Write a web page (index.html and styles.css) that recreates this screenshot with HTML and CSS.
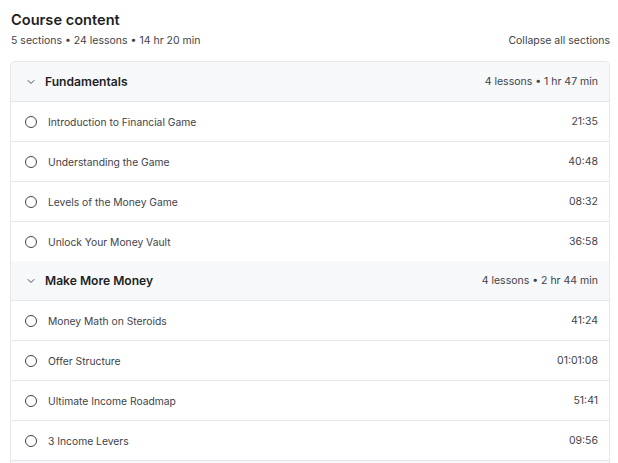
FILE: index.html
```html
<!DOCTYPE html>
<html>
<head>
<meta charset="utf-8">
<link rel="stylesheet" href="styles.css">
</head>
<body>
<div class="page">
  <h2 class="title">Course content</h2>
  <div class="meta-row">
    <span class="meta">5 sections • 24 lessons • 14 hr 20 min</span>
    <span class="collapse">Collapse all sections</span>
  </div>
  <div class="card">
    <div class="section-head">
      <span class="chev"><svg width="8" height="6" viewBox="0 0 8 6"><path d="M1 1.5 L4 4.5 L7 1.5" fill="none" stroke="#4b5058" stroke-width="1" stroke-linecap="round" stroke-linejoin="round"/></svg></span>
      <span class="sec-title">Fundamentals</span>
      <span class="sec-meta">4 lessons • 1 hr 47 min</span>
    </div>
    <div class="lesson"><span class="circle"></span><span class="l-title">Introduction to Financial Game</span><span class="dur">21:35</span></div>
    <div class="lesson"><span class="circle"></span><span class="l-title">Understanding the Game</span><span class="dur">40:48</span></div>
    <div class="lesson"><span class="circle"></span><span class="l-title">Levels of the Money Game</span><span class="dur">08:32</span></div>
    <div class="lesson last"><span class="circle"></span><span class="l-title">Unlock Your Money Vault</span><span class="dur">36:58</span></div>
    <div class="section-head">
      <span class="chev"><svg width="8" height="6" viewBox="0 0 8 6"><path d="M1 1.5 L4 4.5 L7 1.5" fill="none" stroke="#4b5058" stroke-width="1" stroke-linecap="round" stroke-linejoin="round"/></svg></span>
      <span class="sec-title">Make More Money</span>
      <span class="sec-meta">4 lessons • 2 hr 44 min</span>
    </div>
    <div class="lesson"><span class="circle"></span><span class="l-title">Money Math on Steroids</span><span class="dur">41:24</span></div>
    <div class="lesson"><span class="circle"></span><span class="l-title">Offer Structure</span><span class="dur">01:01:08</span></div>
    <div class="lesson"><span class="circle"></span><span class="l-title">Ultimate Income Roadmap</span><span class="dur">51:41</span></div>
    <div class="lesson"><span class="circle"></span><span class="l-title">3 Income Levers</span><span class="dur">09:56</span></div>
    <div class="section-head"></div>
  </div>
</div>
</body>
</html>
```
FILE: styles.css
```css
html, body {
  margin: 0;
  padding: 0;
  background: #ffffff;
}
body {
  font-family: Inter, "Liberation Sans", sans-serif;
  color: #1d1f23;
  overflow: hidden;
  height: 463px;
}
.page {
  padding: 10px 8px 0 10px;
}
.title {
  margin: 0 0 0 1px;
  font-size: 14.6px;
  line-height: 20px;
  font-weight: 600;
  color: #1d1f23;
}
.meta-row {
  display: flex;
  justify-content: space-between;
  align-items: center;
  height: 20px;
  margin-bottom: 11px;
  font-size: 10.5px;
  color: #3f434a;
}
.meta {
  padding-left: 1px;
}
.card {
  border: 1px solid #e6e7ea;
  border-radius: 5px;
  overflow: hidden;
}
.section-head {
  display: flex;
  align-items: center;
  height: 39px;
  background: #f7f8fa;
  border-bottom: 1px solid #e6e7ea;
  padding: 0 11px 0 16px;
}
.chev {
  width: 10px;
  display: flex;
  align-items: center;
  margin-right: 8px;
}
.sec-title {
  flex: 1;
  font-size: 12.1px;
  font-weight: 600;
  color: #1d1f23;
}
.sec-meta {
  font-size: 10.5px;
  color: #3f434a;
}
.lesson {
  display: flex;
  align-items: center;
  height: 39px;
  border-bottom: 1px solid #e6e7ea;
  padding: 0 11px 0 14px;
  font-size: 10.3px;
  color: #3f434a;
}
.lesson.last {
  border-bottom: none;
}
.circle {
  width: 10px;
  height: 10px;
  border: 1.2px solid #3f434a;
  border-radius: 50%;
  margin-right: 11px;
  flex: none;
}
.l-title {
  flex: 1;
}
.dur {
  font-size: 10.5px;
  color: #3f434a;
}
```
